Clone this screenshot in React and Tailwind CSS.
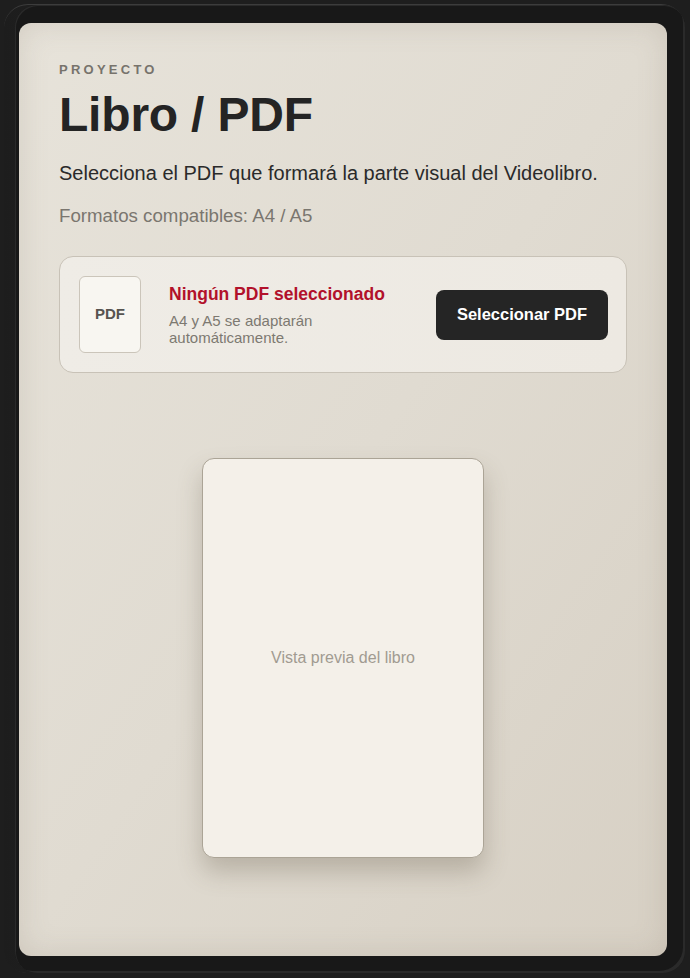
export default function App() {
  return (
    <div
      className="w-[690px] h-[978px] bg-[#1e1e1e] pt-[4px] pr-[5px] pb-[5px] pl-[4px] overflow-hidden"
      style={{ fontFamily: '"Liberation Sans", Arial, sans-serif' }}
    >
      <div className="h-full rounded-[24px] bg-gradient-to-r from-[#1d1d1d] via-[#2c2c2c] to-[#1b1b1b] border-t border-[#3c3c3c] shadow-[inset_-1px_0_0_#3a3a3a]">
        <div className="h-full ml-[11px] rounded-[22px] bg-[#181818] pt-[18px] pl-[4px] pr-[18px] pb-[17px] shadow-[inset_-4px_-4px_0_-2px_#2a2a2a,inset_1px_1px_0_#2a2a2a]">
          <div className="h-full rounded-[12px] bg-gradient-to-br from-[#e7e3da] via-[#e0dbd1] to-[#d7d0c4] shadow-[inset_0_0_30px_rgba(120,108,90,0.18)] pt-[40px] px-[40px] flex flex-col">
            <div className="text-[13px] font-bold tracking-[0.25em] text-[#77736c] leading-none">
              PROYECTO
            </div>
            <h1 className="mt-[15px] text-[48px] font-bold leading-none text-[#242424] tracking-[-0.2px]">
              Libro / PDF
            </h1>
            <p className="mt-[22px] text-[20px] leading-[24px] text-[#2a2a2a]">
              Selecciona el PDF que formará la parte visual del Videolibro.
            </p>
            <p className="mt-[20px] text-[18.7px] leading-[22px] text-[#7a766f]">
              Formatos compatibles: A4 / A5
            </p>
            <div className="mt-[29px] h-[117px] rounded-[14px] border border-[#c8c2b7] bg-gradient-to-r from-[#efece6] to-[#ede9e2] flex items-center pl-[19px] pr-[18px]">
              <div className="w-[62px] h-[77px] shrink-0 rounded-[6px] border border-[#cbc5ba] bg-[#f8f6f1] flex items-center justify-center text-[15px] font-bold text-[#575450]">
                PDF
              </div>
              <div className="flex-1 ml-[28px] mr-[20px]">
                <div className="text-[17.5px] font-bold text-[#b2112b] leading-[20px]">
                  Ningún PDF seleccionado
                </div>
                <div className="mt-[8px] text-[15px] leading-[17px] text-[#7d7971]">
                  A4 y A5 se adaptarán automáticamente.
                </div>
              </div>
              <button className="w-[172px] h-[50px] shrink-0 rounded-[8px] bg-[#252525] text-white text-[16.5px] font-bold">
                Seleccionar PDF
              </button>
            </div>
            <div className="mt-[85px] flex justify-center">
              <div className="w-[282px] h-[400px] rounded-[12px] border border-[#aba496] bg-[#f4f0e9] shadow-[0_14px_24px_rgba(90,80,60,0.28)] flex items-center justify-center text-[16px] text-[#a19b91]">
                Vista previa del libro
              </div>
            </div>
          </div>
        </div>
      </div>
    </div>
  );
}
